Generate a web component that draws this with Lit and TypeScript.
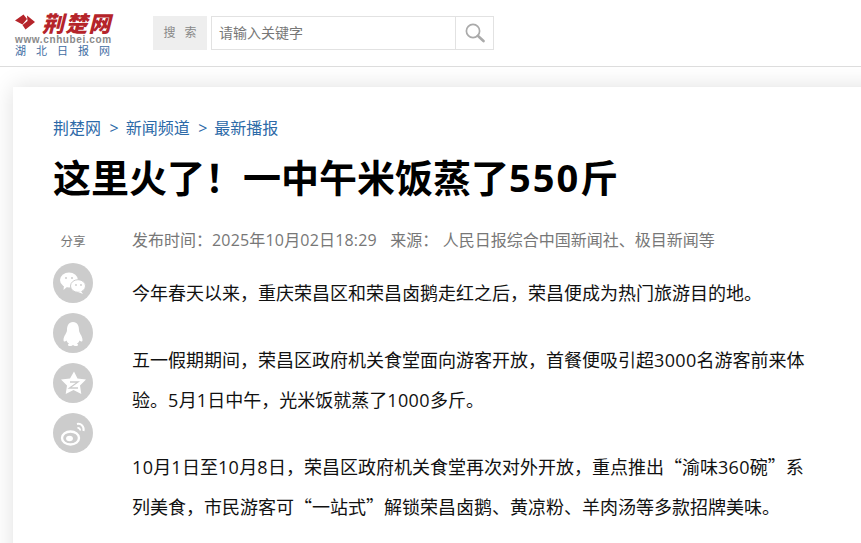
import { LitElement, html, css, svg } from "lit";
import { customElement } from "lit/decorators.js";

@customElement("app-root")
export class AppRoot extends LitElement {
  static styles = css`
    :host { display: block; width: 861px; height: 543px; overflow: hidden; background: #fff; font-family: "Open Sans", "Noto Sans CJK SC", sans-serif; }
    .top { height: 66px; display: flex; align-items: flex-start; border-bottom: 1px solid #ddd; box-sizing: content-box; background: #fff; position: relative; z-index: 1; }
    .logo { width: 153px; padding: 10px 0 0 15px; box-sizing: border-box; flex: none; }
    .logo-main { display: flex; align-items: center; height: 24px; gap: 7px; }
    .logo-name { font-family: "Noto Sans CJK SC", sans-serif; font-weight: 900; font-size: 22px; line-height: 24px; color: #b5242a; letter-spacing: 1.2px; font-style: italic; white-space: nowrap; }
    .logo-url { font-family: "Liberation Sans", sans-serif; font-size: 10px; line-height: 9px; color: #8a8a8a; font-weight: 700; letter-spacing: 0.62px; margin-top: 1px; white-space: nowrap; }
    .logo-cn { font-family: "Noto Sans CJK SC", sans-serif; font-size: 11px; line-height: 13px; color: #3f6da3; letter-spacing: 10px; white-space: nowrap; }
    .search { display: flex; margin-top: 16px; height: 34px; }
    .s-label { width: 54px; height: 34px; background: #eee; color: #888; font-size: 12px; line-height: 33px; text-align: center; margin-right: 4px; white-space: pre; word-spacing: 1.5px; }
    .s-box { width: 245px; height: 34px; box-sizing: border-box; border: 1px solid #e2e2e2; padding-left: 7px; font-size: 14px; line-height: 31px; color: #777; background: #fff; }
    .s-btn { width: 38px; height: 34px; box-sizing: border-box; border: 1px solid #e2e2e2; border-left: 0; display: flex; align-items: center; justify-content: center; }
    .band { padding: 20px 0 0 13px; }
    .card { background: #fff; padding: 31px 0 0 40px; width: 900px; height: 500px; box-sizing: border-box; box-shadow: 0 0 22px rgba(0,0,0,0.13); }
    .crumb { font-size: 16px; line-height: 20px; color: #2d6aa8; white-space: nowrap; }
    .sep { margin: 0 7px 0 8.5px; }
    h1 { margin: 12px 0 0; font-size: 38px; line-height: 54px; font-weight: 700; color: #000; white-space: nowrap; }
    .num { letter-spacing: 2px; }
    .body { display: flex; margin-top: 26px; }
    .share { width: 40px; margin-right: 39px; flex: none; display: flex; flex-direction: column; align-items: center; gap: 10px; }
    .share-t { font-size: 12.5px; line-height: 20px; color: #777; padding-top: 2px; margin-bottom: 1px; }
    .ic { width: 40px; height: 40px; border-radius: 50%; background: #ccc; display: block; }
    .main { width: 680px; flex: none; }
    .meta { font-size: 16px; line-height: 20px; color: #777; white-space: pre; word-spacing: 0.3px; }
    .date { letter-spacing: 0.18px; }
    p { margin: 0 0 27px; font-size: 18px; line-height: 40px; color: #111; }
    .q { font-family: "Noto Sans CJK SC", sans-serif; line-height: 0; }
    .d { letter-spacing: 0.35px; }
    .first { margin-top: 23px; }
  `;

  icon(inner: unknown) {
    return html`<svg class="ic" viewBox="0 0 40 40">${inner}</svg>`;
  }

  render() {
    return html`
      <div class="top">
        <div class="logo">
          <div class="logo-main">
            <svg width="20" height="16" viewBox="0 0 20 16"><path d="M0 6.5 L8.5 0.5 L12 5 L7.5 10.5 Z M12 1.5 L20 8 L10.5 15.5 L7.5 11 L12.5 7 Z" fill="#b5242a"/></svg>
            <span class="logo-name">荆楚网</span>
          </div>
          <div class="logo-url">www.cnhubei.com</div>
          <div class="logo-cn">湖北日报网</div>
        </div>
        <div class="search">
          <div class="s-label">搜  索</div>
          <div class="s-box">请输入关键字</div>
          <div class="s-btn">
            <svg width="20" height="20" viewBox="0 0 20 20" fill="none"><circle cx="8" cy="8" r="6.6" stroke="#aaa" stroke-width="1.7"/><path d="M12.8 12.8 L18.5 18" stroke="#aaa" stroke-width="2.6" stroke-linecap="round"/></svg>
          </div>
        </div>
      </div>
      <div class="band">
        <div class="card">
          <div class="crumb">荆楚网<span class="sep">&gt;</span>新闻频道<span class="sep">&gt;</span>最新播报</div>
          <h1>这里火了！一中午米饭蒸了<span class="num">550</span>斤</h1>
          <div class="body">
            <div class="share">
              <div class="share-t">分享</div>
              ${this.icon(svg`<ellipse cx="16" cy="17" rx="9" ry="7.5" fill="#fff"/><path d="M11 22 L10.5 27 L15 23Z" fill="#fff"/><ellipse cx="25" cy="23" rx="7.5" ry="6.3" stroke="#ccc" stroke-width="1" fill="#fff"/><path d="M28 28 L30 31 L25 29Z" fill="#fff"/><circle cx="13" cy="15" r="1" fill="#ccc"/><circle cx="19" cy="15" r="1" fill="#ccc"/><circle cx="23" cy="22" r="0.9" fill="#ccc"/><circle cx="28" cy="22" r="0.9" fill="#ccc"/>`)}
              ${this.icon(svg`<path d="M20 9 C15.5 9 14 13 14 17 C14 20 10.5 23 10.5 27 C10.5 29 12 29 13.5 27.5 C14 29 15 30 16 30.5 C14.5 31.5 14.5 33 17 33 C18.5 33 19.5 32.5 20 32 C20.5 32.5 21.5 33 23 33 C25.5 33 25.5 31.5 24 30.5 C25 30 26 29 26.5 27.5 C28 29 29.5 29 29.5 27 C29.5 23 26 20 26 17 C26 13 24.5 9 20 9Z" fill="#fff"/>`)}
              ${this.icon(svg`<path d="M21 8.5 L24.5 15.5 L33 16.5 L27 22.5 L28.3 31 L20.5 27 L12.7 31 L14 22.5 L8 16.5 L17 15.5Z" fill="#fff"/><path d="M17 19 H25 L16.5 25 H25" fill="none" stroke="#ccc" stroke-width="1.3"/>`)}
              ${this.icon(svg`<ellipse cx="17.5" cy="25" rx="8.5" ry="6.5" fill="none" stroke="#fff" stroke-width="2.4"/><ellipse cx="16.5" cy="25.5" rx="3.4" ry="2.8" fill="#fff"/><path d="M24 11 C28 10 31.5 13.5 30.5 18" fill="none" stroke="#fff" stroke-width="2"/><path d="M24.5 15 C26 14.7 27.5 16 27 17.5" fill="none" stroke="#fff" stroke-width="1.8"/>`)}
            </div>
            <div class="main">
              <div class="meta">发布时间：<span class="date">2025年10月02日18:29</span>   来源： 人民日报综合中国新闻社、极目新闻等</div>
              <p class="first">今年春天以来，重庆荣昌区和荣昌卤鹅走红之后，荣昌便成为热门旅游目的地。</p>
              <p>五一假期期间，荣昌区政府机关食堂面向游客开放，首餐便吸引超<span class="d">3000</span>名游客前来体验。<span class="d">5</span>月<span class="d">1</span>日中午，光米饭就蒸了<span class="d">1000</span>多斤。</p>
              <p><span class="d">10</span>月<span class="d">1</span>日至<span class="d">10</span>月<span class="d">8</span>日，荣昌区政府机关食堂再次对外开放，重点推出<span class="q">“</span>渝味<span class="d">360</span>碗<span class="q">”</span>系列美食，市民游客可<span class="q">“</span>一站式<span class="q">”</span>解锁荣昌卤鹅、黄凉粉、羊肉汤等多款招牌美味。</p>
            </div>
          </div>
        </div>
      </div>
    `;
  }
}
